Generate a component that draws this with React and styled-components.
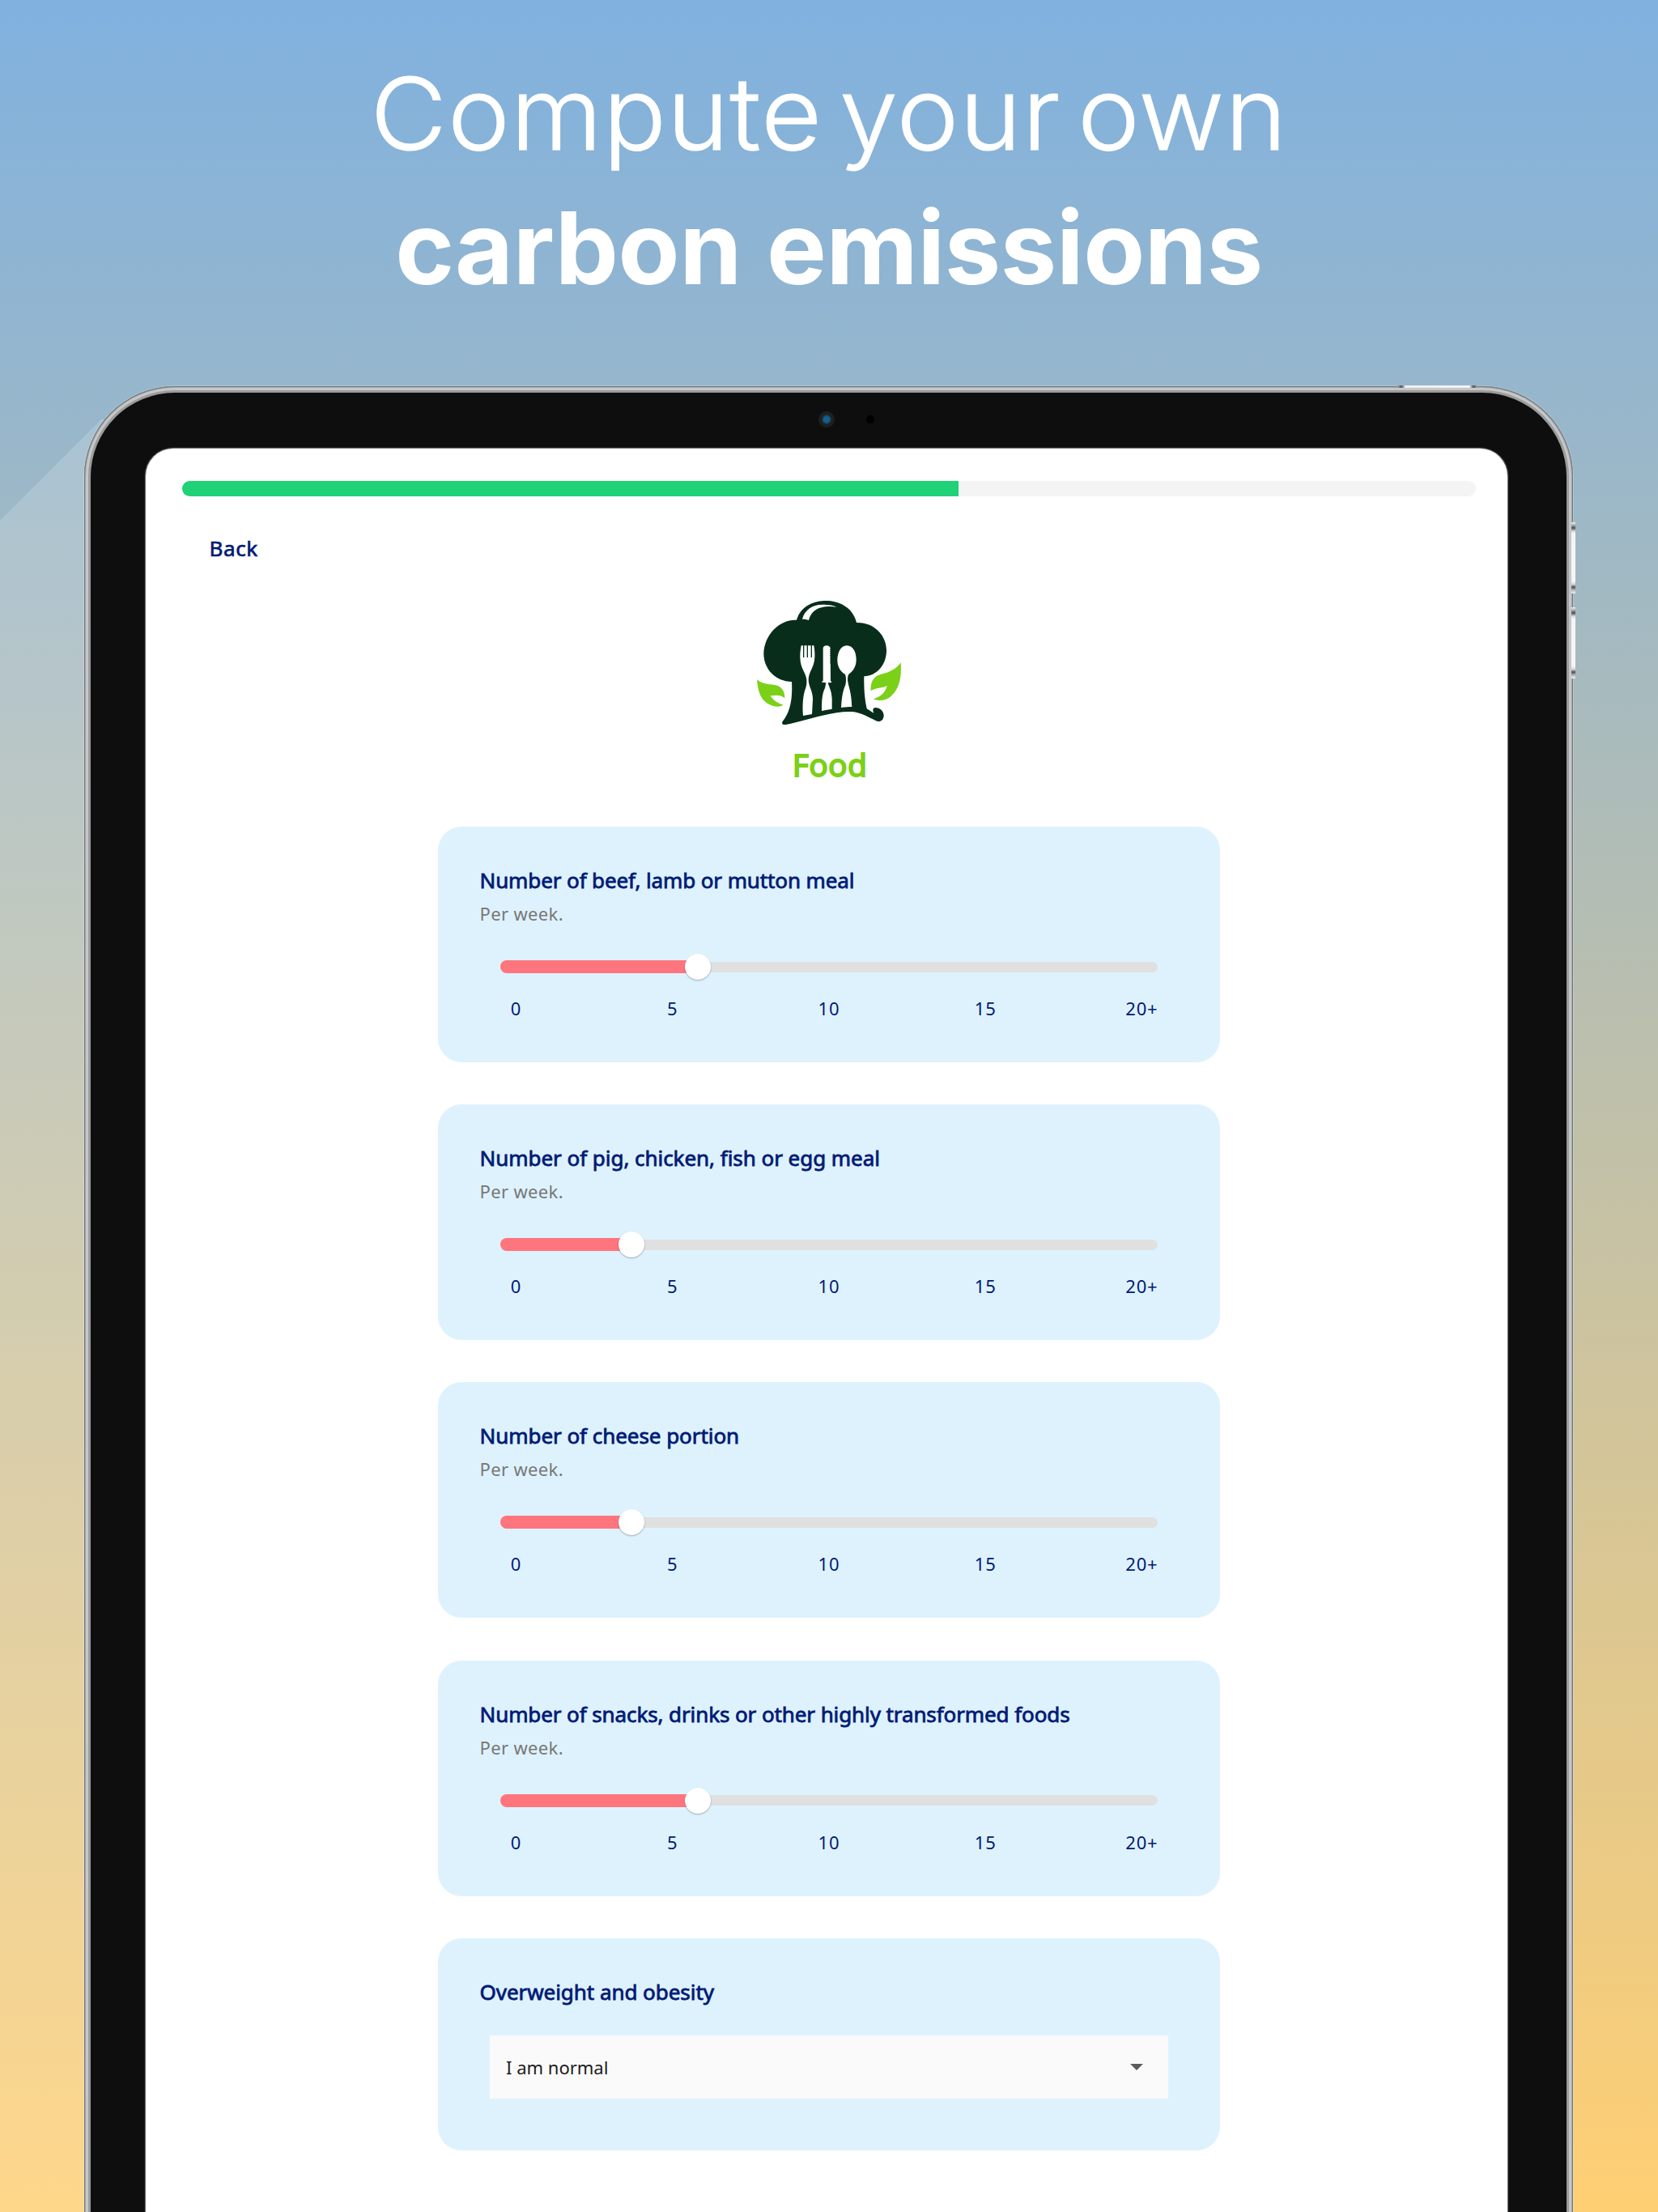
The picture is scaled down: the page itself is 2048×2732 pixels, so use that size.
import React from "react";
import styled, { createGlobalStyle } from "styled-components";

const GlobalStyle = createGlobalStyle`
  *, *::before, *::after { box-sizing: border-box; }
  body { margin: 0; overflow: hidden; }
`;

const ui = `"Noto Sans", "Open Sans", sans-serif`;
const navy = "#001a75";

const Page = styled.div`
  position: relative;
  width: 2048px;
  height: 2732px;
  overflow: hidden;
  display: flex;
  flex-direction: column;
  align-items: center;
  background: linear-gradient(#80b1df 0%, #bfc0aa 50%, #ffcf73 100%);
  font-family: ${ui};
`;

const LightBeam = styled.div`
  position: absolute;
  inset: 0;
  background: rgba(255, 255, 255, 0.17);
  clip-path: polygon(0 643px, 125px 518px, 300px 518px, 300px 100%, 0 100%);
`;

const Headline = styled.h1`
  flex: none;
  margin: 0;
  height: 477px;
  padding-top: 57px;
  display: flex;
  flex-direction: column;
  align-items: center;
  font-family: Inter, sans-serif;
  font-size: 124px;
  line-height: 166px;
  color: #fff;
`;

const HeadlineLine = styled.span`
  display: block;
  white-space: nowrap;
  font-weight: ${(p) => (p.$bold ? 700 : 300)};
  letter-spacing: ${(p) => (p.$bold ? -0.35 : 1)}px;
  word-spacing: ${(p) => (p.$bold ? 2 : -16)}px;
  transform: ${(p) => (p.$bold ? "none" : "scaleX(1.045)")};
  -webkit-text-stroke: ${(p) => (p.$bold ? 0 : 1)}px #fff;
`;

const Tablet = styled.div`
  position: relative;
  flex: none;
  width: 1839px;
  height: 2400px;
  margin-right: 1px;
  padding: 77px 81px 0 76px;
  border-radius: 112px 112px 0 0;
  background: #0e0e0e;
  box-shadow:
    0 0 0 1px rgba(255, 255, 255, 0.25),
    inset 0 0 0 1px #6f787f,
    inset 0 0 0 2px #a5a7a9,
    inset 0 0 0 5px #c6c7c9,
    inset 0 0 0 8px #9b9c9d;
`;

const TopButton = styled.i`
  position: absolute;
  left: 1622px;
  top: -1px;
  width: 99px;
  height: 3px;
  background: linear-gradient(90deg, #aaa, #555 5px, #eee 10px, #f4f4f4 89px, #555 94px, #aaa);
`;

const SideButton = styled.i`
  position: absolute;
  right: -3px;
  top: ${(p) => p.$top}px;
  width: 5px;
  height: 88px;
  background: linear-gradient(#eee, #bbb 3px, #4c4f52 7px, #d8d8d8 11px, #f5f5f5 14px, #f5f5f5 73px, #d0d0d0 77px, #4c4f52 80px, #bbb 84px, #eee);
`;

const Camera = styled.i`
  position: absolute;
  left: 907px;
  top: 31px;
  width: 20px;
  height: 20px;
  border-radius: 50%;
  background: radial-gradient(circle, #16608c 0 3px, #124562 5px, #1f1f1f 6px 10px);
`;

const Sensor = styled.i`
  position: absolute;
  left: 966px;
  top: 36px;
  width: 10px;
  height: 10px;
  border-radius: 50%;
  background: #000;
`;

const Screen = styled.main`
  display: flex;
  flex-direction: column;
  height: 100%;
  padding: 40px 39px 0 45px;
  border-radius: 34px 34px 0 0;
  background: #fff;
  box-shadow: 0 0 0 1px #6b6b6b, 0 0 0 2px #1c1c1c;
`;

const Progress = styled.div`
  height: 19px;
  border-radius: 10px;
  overflow: hidden;
  background: #f4f4f4;
`;

const ProgressValue = styled.div`
  width: 60%;
  height: 100%;
  background: #1fd177;
`;

const BackButton = styled.button`
  align-self: flex-start;
  margin: 45px 0 0 33.5px;
  padding: 0;
  border: 0;
  background: none;
  font: 400 26px/38px ${ui};
  letter-spacing: 0.6px;
  color: ${navy};
  -webkit-text-stroke: 0.7px ${navy};
`;

const Category = styled.header`
  display: flex;
  flex-direction: column;
  align-items: center;
  margin-top: 24px;
  padding-left: 2px;
`;

const CategoryName = styled.h2`
  margin: -7px 0 0;
  font: 400 39px/54px ${ui};
  letter-spacing: 0.3px;
  color: #7bd018;
  -webkit-text-stroke: 1.8px #7bd018;
`;

const Questions = styled.section`
  display: flex;
  flex-direction: column;
  align-items: center;
  gap: 52.2px;
  margin-top: 50px;
`;

const Card = styled.article`
  width: 966px;
  height: ${(p) => (p.$select ? 262 : 291)}px;
  padding: 48px 0 0;
  border-radius: 29px;
  background: #def2fe;
`;

const Title = styled.h3`
  margin: 0 50px 0 51.5px;
  font: 400 26px/36px ${ui};
  letter-spacing: ${(p) => p.$track || 0}px;
  white-space: nowrap;
  color: ${navy};
  -webkit-text-stroke: 0.8px ${navy};
`;

const Hint = styled.p`
  margin: 8px 50px 0 51.5px;
  font-size: 22px;
  line-height: 30px;
  letter-spacing: 0.35px;
  color: #777;
`;

const SliderTrack = styled.div`
  display: flex;
  align-items: center;
  width: 812px;
  height: 32px;
  margin: 35px 0 0 77px;
`;

const SliderValue = styled.div`
  flex: none;
  width: ${(p) => p.$value * 5}%;
  height: 16px;
  border-radius: 8px 0 0 8px;
  background: #ff757d;
`;

const SliderRest = styled.div`
  flex: 1;
  height: 13px;
  border-radius: 0 7px 7px 0;
  background: #e0e0e0;
`;

const Thumb = styled.div`
  flex: none;
  width: 32px;
  height: 32px;
  margin: 0 -16px;
  z-index: 1;
  border-radius: 50%;
  background: #fff;
  box-shadow: 0 1px 2px rgba(0, 0, 0, 0.3);
`;

const Scale = styled.div`
  display: grid;
  grid-template-columns: repeat(5, 1fr);
  margin-top: 20px;
  font-size: 22px;
  line-height: 30px;
  letter-spacing: 0.9px;
  text-align: center;
  color: ${navy};
`;

const Select = styled.button`
  display: flex;
  align-items: center;
  justify-content: space-between;
  width: 838px;
  height: 78px;
  margin: 36px 0 0 64px;
  padding: 0 31px 0 20px;
  border: 0;
  background: #fafafa;
  font: 400 22px/30px ${ui};
  color: #1c1c1c;
`;

const Arrow = styled.i`
  border: 8px solid transparent;
  border-top-color: #5c5c5c;
  border-bottom: 0;
`;

const FoodLogo = () => (
  <svg width="250" height="204" viewBox="0 0 750 612" aria-label="Food">
    <path
      fill="#082e1b"
      d="M252 137C265 90 310 66 360 66C415 66 462 95 474 147C540 145 585 195 585 250C585 305 548 345 502 346C501 390 504 430 512 466C520 471 530 478 538 482C532 470 535 462 545 462C560 462 575 475 575 492C574 508 562 516 550 512C530 505 500 484 465 478C420 474 370 485 300 503C265 512 235 520 212 525C200 527 195 520 200 513C225 480 238 440 234 366C175 366 130 320 130 262C132 190 190 134 252 137Z"
    />
    <g fill="#fff">
      <path d="M273 134C282 100 312 76 362 81C378 82 388 84 400 89C355 82 308 90 297 138C290 135 282 134 273 134Z" />
      <path d="M269 232L316 232C321 262 322 290 308 318C300 335 296 345 296 360C297 385 312 400 312 430L309 486L276 492C273 460 275 425 282 400C288 385 290 375 289 358C287 335 270 320 266 290C263 268 266 250 269 232Z" />
      <path d="M350 241C352 229 374 229 377 241L378 364L382 366L381 369L368 370C372 385 382 400 383 430L383 467L345 474C345 440 346 410 357 390L361 370L346 368L346 365L350 362Z" />
      <path d="M438 232C462 232 473 258 473 285C473 312 458 330 445 338C442 342 441 350 441 360C444 385 455 400 457 459C445 459 432 460 417 462C419 420 425 395 433 378C436 365 436 345 431 338C416 330 403 312 403 285C404 258 415 232 438 232Z" />
    </g>
    <path stroke="#082e1b" strokeWidth="4" fill="none" d="M278 230V276M292 230V276M307 230V276" />
    <path stroke="#082e1b" strokeWidth="3" strokeDasharray="3 4" d="M377 246V300" />
    <g fill="#7bd018">
      <path d="M105 358C130 378 155 374 180 380C200 387 208 405 208 427C195 414 175 415 155 418C165 435 185 448 202 451C195 462 165 460 145 447C115 430 108 395 105 358Z" />
      <path d="M638 295C642 350 632 400 595 425C575 437 550 438 537 430C560 422 580 410 587 381C570 390 545 388 527 400C525 370 535 345 565 338C595 332 620 320 638 295Z" />
    </g>
  </svg>
);

const questions = [
  { title: "Number of beef, lamb or mutton meal", value: 6, track: -0.11 },
  { title: "Number of pig, chicken, fish or egg meal", value: 4, track: -0.04 },
  { title: "Number of cheese portion", value: 4, track: -0.05 },
  { title: "Number of snacks, drinks or other highly transformed foods", value: 6, track: -0.1 },
];

const marks = ["0", "5", "10", "15", "20+"];

function SliderCard({ title, value, track }) {
  return (
    <Card>
      <Title $track={track}>{title}</Title>
      <Hint>Per week.</Hint>
      <SliderTrack>
        <SliderValue $value={value} />
        <Thumb />
        <SliderRest />
      </SliderTrack>
      <Scale>
        {marks.map((m) => (
          <span key={m}>{m}</span>
        ))}
      </Scale>
    </Card>
  );
}

export default function App() {
  return (
    <Page>
      <GlobalStyle />
      <LightBeam />
      <Headline>
        <HeadlineLine>Compute your own</HeadlineLine>
        <HeadlineLine $bold>carbon emissions</HeadlineLine>
      </Headline>
      <Tablet>
        <TopButton />
        <SideButton $top={168} />
        <SideButton $top={273} />
        <Camera />
        <Sensor />
        <Screen>
          <Progress>
            <ProgressValue />
          </Progress>
          <BackButton>Back</BackButton>
          <Category>
            <FoodLogo />
            <CategoryName>Food</CategoryName>
          </Category>
          <Questions>
            {questions.map((q) => (
              <SliderCard key={q.title} {...q} />
            ))}
            <Card $select>
              <Title $track={-0.05}>Overweight and obesity</Title>
              <Select>
                I am normal
                <Arrow />
              </Select>
            </Card>
          </Questions>
        </Screen>
      </Tablet>
    </Page>
  );
}
